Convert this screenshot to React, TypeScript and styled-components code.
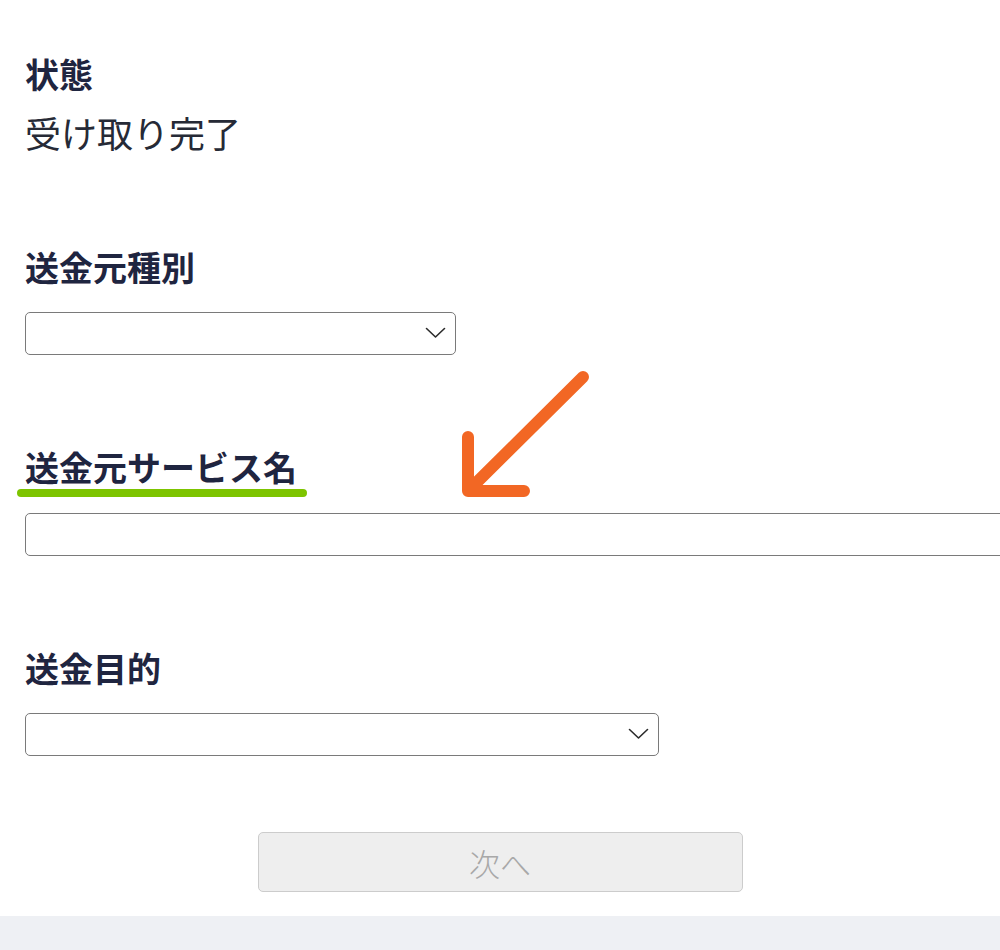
import React from "react";
import styled, { createGlobalStyle } from "styled-components";

const GlobalStyle = createGlobalStyle`
  html, body {
    margin: 0;
    padding: 0;
    background: #ffffff;
    font-family: "Noto Sans CJK JP", "Noto Sans", sans-serif;
  }
  #root {
    overflow: hidden;
    width: 1000px;
    height: 950px;
  }
`;

const Page = styled.div`
  position: relative;
  width: 1000px;
  height: 950px;
  display: flex;
  flex-direction: column;
  overflow: hidden;
`;

const Form = styled.div`
  display: flex;
  flex-direction: column;
  gap: 92px;
  padding: 54px 0 0 25px;
`;

const Field = styled.div<{ $gap: number }>`
  display: flex;
  flex-direction: column;
  gap: ${(p) => p.$gap}px;
`;

const Label = styled.div`
  position: relative;
  align-self: flex-start;
  font-size: 34px;
  line-height: 40px;
  height: 40px;
  font-weight: 700;
  color: #1f2540;
`;

const Highlight = styled.span`
  position: absolute;
  left: -8px;
  right: -10px;
  top: 42px;
  height: 8px;
  border-radius: 4px;
  background: #7dc400;
`;

const Value = styled.div`
  font-size: 36px;
  line-height: 45px;
  height: 45px;
  font-weight: 400;
  color: #262a36;
`;

const SelectWrap = styled.div<{ $w: number }>`
  position: relative;
  width: ${(p) => p.$w}px;
  height: 43px;
`;

const Select = styled.select`
  appearance: none;
  -webkit-appearance: none;
  box-sizing: border-box;
  width: 100%;
  height: 43px;
  border: 1.5px solid #7a7a7a;
  border-radius: 5px;
  background: #ffffff;
  margin: 0;
  font-size: 20px;
`;

const Chevron = styled.svg`
  position: absolute;
  right: 10px;
  top: 15px;
  width: 21px;
  height: 12px;
  pointer-events: none;
`;

const TextInput = styled.input`
  box-sizing: border-box;
  width: 1000px;
  height: 43px;
  border: 1.5px solid #7a7a7a;
  border-radius: 5px;
  background: #ffffff;
  margin: 0;
  padding: 0;
`;

const ButtonRow = styled.div`
  display: flex;
  justify-content: center;
  padding: 76px 0 0 0;
`;

const NextButton = styled.button`
  box-sizing: border-box;
  width: 485px;
  height: 60px;
  background: #eeeeee;
  border: 1.5px solid #cccccc;
  border-radius: 5px;
  color: #a8a8a8;
  font-family: "Noto Sans CJK JP", "Noto Sans", sans-serif;
  font-size: 31px;
  font-weight: 300;
  cursor: default;
`;

const Footer = styled.div`
  margin-top: 24px;
  flex: 1;
  background: #eef0f4;
`;

const Arrow = styled.svg`
  position: absolute;
  left: 455px;
  top: 365px;
  width: 145px;
  height: 140px;
`;

function ChevronIcon() {
  return (
    <Chevron viewBox="0 0 21 12">
      <path d="M1.5 1.5 L10.5 10 L19.5 1.5" fill="none" stroke="#2b2b2b" strokeWidth="1.6" strokeLinecap="round" strokeLinejoin="round" />
    </Chevron>
  );
}

export default function App() {
  return (
    <Page>
      <GlobalStyle />
      <Form>
        <Field $gap={16}>
          <Label>状態</Label>
          <Value>受け取り完了</Value>
        </Field>
        <Field $gap={25}>
          <Label>送金元種別</Label>
          <SelectWrap $w={431}>
            <Select defaultValue="">
              <option value=""></option>
            </Select>
            <ChevronIcon />
          </SelectWrap>
        </Field>
        <Field $gap={26}>
          <Label>
            送金元サービス名
            <Highlight />
          </Label>
          <TextInput type="text" />
        </Field>
        <Field $gap={25}>
          <Label>送金目的</Label>
          <SelectWrap $w={634}>
            <Select defaultValue="">
              <option value=""></option>
            </Select>
            <ChevronIcon />
          </SelectWrap>
        </Field>
      </Form>
      <ButtonRow>
        <NextButton disabled>次へ</NextButton>
      </ButtonRow>
      <Footer />
      <Arrow viewBox="0 0 145 140">
        <g fill="none" stroke="#f26724" strokeWidth="12" strokeLinecap="round" strokeLinejoin="round">
          <path d="M128 12 L15 124" />
          <path d="M13 72 L13 126 L69 126" />
        </g>
      </Arrow>
    </Page>
  );
}
